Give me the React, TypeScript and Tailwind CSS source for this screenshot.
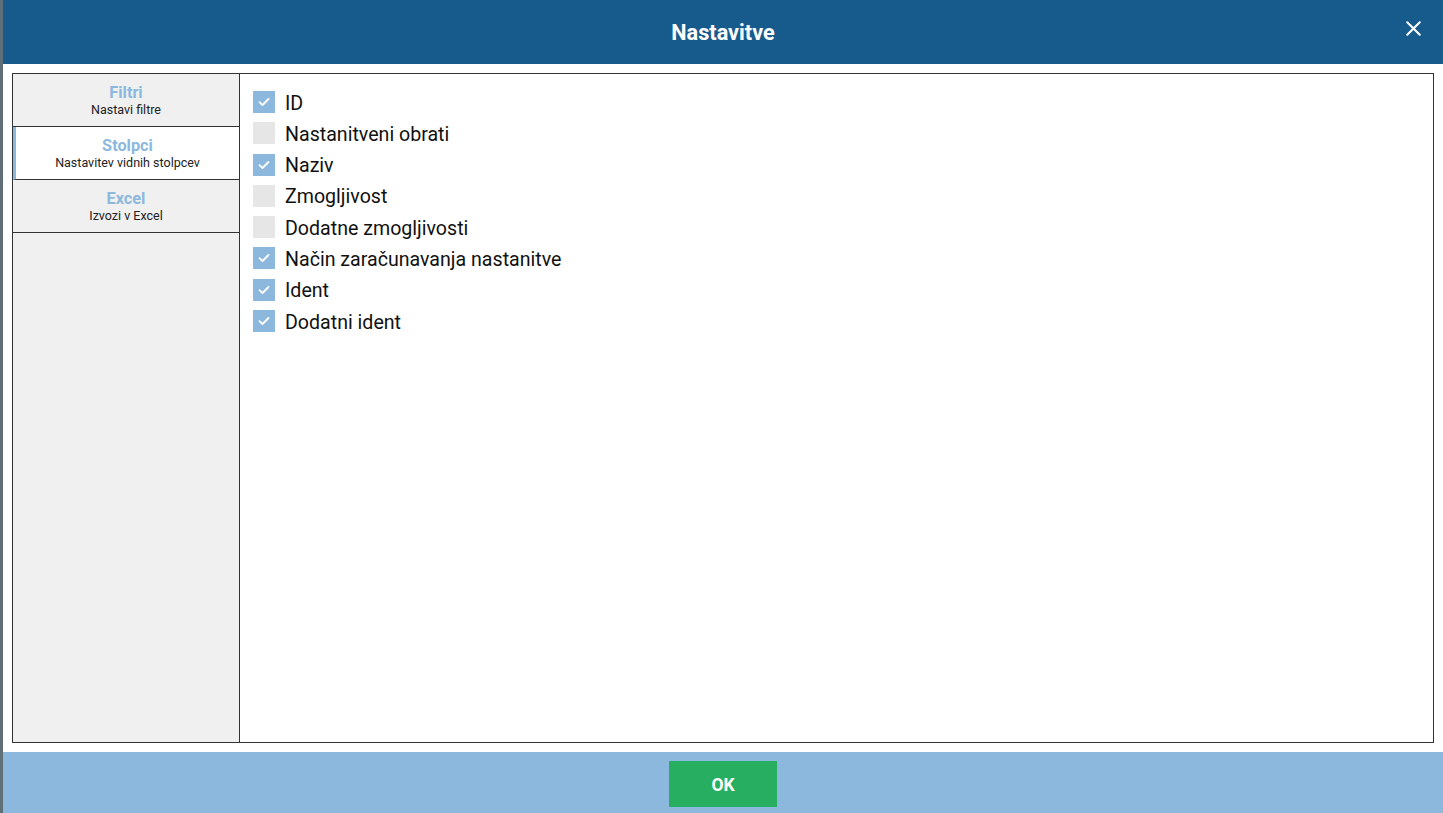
import { X } from 'lucide-react'

const tabs = [
  { title: 'Filtri', sub: 'Nastavi filtre', active: false },
  { title: 'Stolpci', sub: 'Nastavitev vidnih stolpcev', active: true },
  { title: 'Excel', sub: 'Izvozi v Excel', active: false },
]

const columns = [
  { label: 'ID', checked: true },
  { label: 'Nastanitveni obrati', checked: false },
  { label: 'Naziv', checked: true },
  { label: 'Zmogljivost', checked: false },
  { label: 'Dodatne zmogljivosti', checked: false },
  { label: 'Način zaračunavanja nastanitve', checked: true },
  { label: 'Ident', checked: true },
  { label: 'Dodatni ident', checked: true },
]

function Check({ checked }: { checked: boolean }) {
  return (
    <span
      className={
        'flex h-[22px] w-[22px] shrink-0 items-center justify-center ' +
        (checked ? 'bg-[#8db8de]' : 'bg-[#e6e6e6]')
      }
    >
      {checked && (
        <svg width="12" height="10" viewBox="0 0 12 10" fill="none">
          <path d="M1.5 5.2 4.5 8 10.5 2" stroke="white" strokeWidth="1.8" strokeLinecap="round" strokeLinejoin="round" />
        </svg>
      )}
    </span>
  )
}

export default function App() {
  return (
    <div className="flex h-[813px] w-[1443px] overflow-hidden font-['Roboto',sans-serif]">
      <div className="w-[3px] shrink-0 bg-[#5f6e78]" />
      <div className="flex min-w-0 flex-1 flex-col bg-white">
        {/* header */}
        <div className="relative flex h-[64px] shrink-0 items-center justify-center bg-[#175a8c] pt-[2px]">
          <h1 className="text-[21.7px] font-bold text-white">Nastavitve</h1>
          <X className="absolute right-[17px] top-[16px] text-white" size={25} strokeWidth={2} />
        </div>

        {/* body */}
        <div className="flex min-h-0 flex-1 pt-[9px] pb-[9px] pl-[9px] pr-[9px]">
          <div className="flex flex-1 border border-[#333]">
            <div className="flex w-[227px] shrink-0 flex-col border-r border-[#333] bg-[#f0f0f0]">
              {tabs.map((t) => (
                <div
                  key={t.title}
                  className={
                    'flex h-[53px] flex-col items-center justify-center border-b border-[#333] ' +
                    (t.active ? 'border-l-[3px] border-l-[#8db8de] bg-white' : '')
                  }
                >
                  <div className="text-[16.3px] leading-[19px] font-bold text-[#8db8de]">{t.title}</div>
                  <div className="text-[12.5px] leading-[15px] text-[#222]">{t.sub}</div>
                </div>
              ))}
            </div>
            <div className="flex flex-1 flex-col gap-[9.3px] pt-[17px] pl-[13px]">
              {columns.map((c) => (
                <label key={c.label} className="flex h-[22px] items-center gap-[10px]">
                  <Check checked={c.checked} />
                  <span className="mt-[3px] text-[19.6px] leading-[22px] text-[#111]">{c.label}</span>
                </label>
              ))}
            </div>
          </div>
        </div>

        {/* footer */}
        <div className="flex h-[61px] shrink-0 items-center justify-center bg-[#8db8de] pt-[2px]">
          <button className="h-[46px] w-[108px] bg-[#27ae60] pt-[3px] text-[17.5px] font-bold text-white">OK</button>
        </div>
      </div>
    </div>
  )
}
